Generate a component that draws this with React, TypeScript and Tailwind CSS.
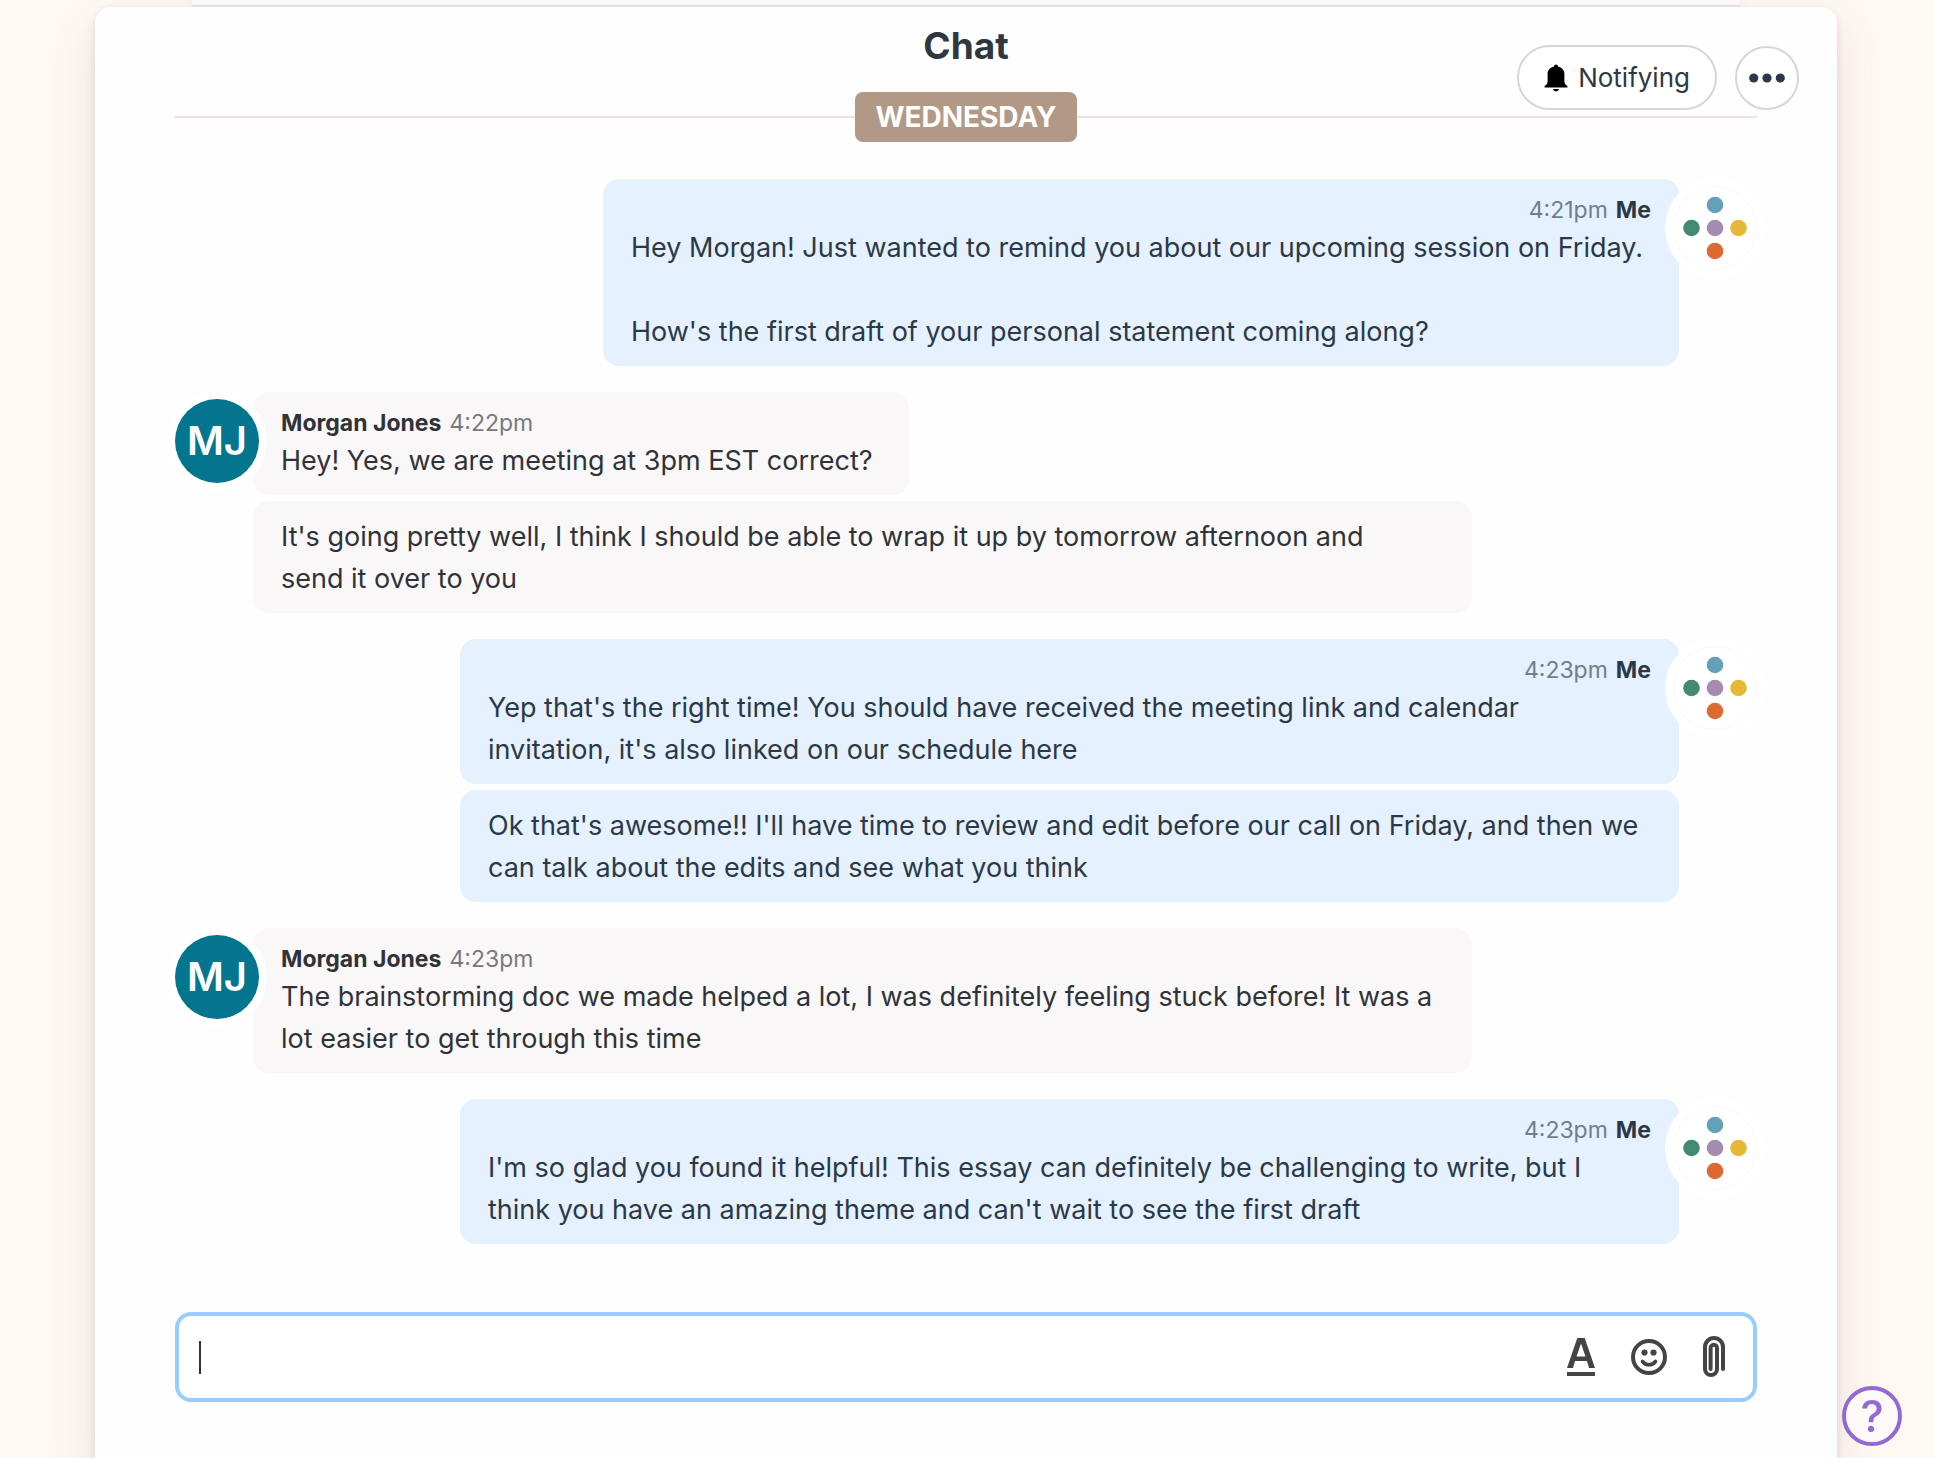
import type { ReactNode } from "react";

type Message = {
  text: string;
};

type MessageGroup = {
  id: number;
  author: string;
  time: string;
  mine: boolean;
  messages: Message[];
};

const groups: MessageGroup[] = [
  {
    id: 1,
    author: "Me",
    time: "4:21pm",
    mine: true,
    messages: [
      {
        text: "Hey Morgan! Just wanted to remind you about our upcoming session on Friday.\n\nHow's the first draft of your personal statement coming along?",
      },
    ],
  },
  {
    id: 2,
    author: "Morgan Jones",
    time: "4:22pm",
    mine: false,
    messages: [
      { text: "Hey! Yes, we are meeting at 3pm EST correct?" },
      {
        text: "It's going pretty well, I think I should be able to wrap it up by tomorrow afternoon and send\u00a0it over to you",
      },
    ],
  },
  {
    id: 3,
    author: "Me",
    time: "4:23pm",
    mine: true,
    messages: [
      {
        text: "Yep that's the right time! You should have received the meeting link and calendar invitation, it's also linked on our schedule here",
      },
      {
        text: "Ok that's awesome!! I'll have time to review and edit before our call on Friday, and then we can talk about the edits and see what you think",
      },
    ],
  },
  {
    id: 4,
    author: "Morgan Jones",
    time: "4:23pm",
    mine: false,
    messages: [
      {
        text: "The brainstorming doc we made helped a lot, I was definitely feeling stuck before! It was a lot easier to get through this time",
      },
    ],
  },
  {
    id: 5,
    author: "Me",
    time: "4:23pm",
    mine: true,
    messages: [
      {
        text: "I'm so glad you found it helpful! This essay can definitely be challenging to write, but I think you have an amazing theme and can't wait to see the first draft",
      },
    ],
  },
];

function BellIcon() {
  return (
    <svg width="24" height="28" viewBox="0 0 24 28" fill="#000" aria-hidden="true">
      <path d="M12 0.5c1.200 0 1.900.8 2 1.900 4 .9 6.400 3.600 6.400 7.600v7.500c0 2 .9 3.200 3 4.500v1.500H.6V22c2.100-1.300 3-2.500 3-4.500V10c0-4 2.400-6.700 6.400-7.600.1-1.100.8-1.900 2-1.900Z" />
      <path d="M9 25h6c-.5 1.600-1.600 2.300-3 2.300S9.500 26.600 9 25Z" />
    </svg>
  );
}

function DotsIcon() {
  return (
    <svg width="36" height="10" viewBox="0 0 36 10" fill="#2b3a4a" aria-hidden="true">
      <circle cx="4.700" cy="5" r="4.600" />
      <circle cx="18" cy="5" r="4.600" />
      <circle cx="31.300" cy="5" r="4.600" />
    </svg>
  );
}

function FormatIcon() {
  return (
    <svg width="28" height="38" viewBox="0 0 28 38" fill="#454346" aria-hidden="true">
      <path
        fillRule="evenodd"
        d="M10.300 0h7.400L28 30h-6l-2-7H8l-2 7H0L10.300 0Zm3.700 5.500L9.500 18.500h9L14 5.500Z"
      />
      <path d="M0 34h28v4H0z" />
    </svg>
  );
}

function SmileIcon() {
  return (
    <svg width="36" height="36" viewBox="0 0 36 36" fill="none" aria-hidden="true">
      <circle cx="18" cy="18" r="16" stroke="#454346" strokeWidth="4" />
      <circle cx="13.500" cy="13.500" r="3.100" fill="#454346" />
      <circle cx="22.500" cy="13.500" r="3.100" fill="#454346" />
      <path d="M11.500 22.500c3.500 4.300 9.500 4.300 13 0" stroke="#454346" strokeWidth="3.600" strokeLinecap="round" />
    </svg>
  );
}

function ClipIcon() {
  return (
    <svg width="22" height="42" viewBox="0 0 22 42" fill="none" aria-hidden="true">
      <path
        d="M20 33V11a9 9 0 0 0-18 0v22a6 6 0 0 0 12 0V12a3.200 3.200 0 0 0-6.400 0v21"
        stroke="#454346"
        strokeWidth="4"
        strokeLinecap="round"
      />
    </svg>
  );
}

function TeamLogo() {
  return (
    <svg width="84" height="84" viewBox="0 0 84 84" aria-hidden="true">
      <circle cx="42" cy="42" r="41.500" fill="#fff" stroke="#faf6fb" />
      <circle cx="42" cy="19" r="8.300" fill="#64a0b8" />
      <circle cx="18.500" cy="42" r="8.300" fill="#448a6e" />
      <circle cx="42" cy="42" r="8.300" fill="#a58bad" />
      <circle cx="65.500" cy="42" r="8.300" fill="#e6b836" />
      <circle cx="42" cy="65" r="8.300" fill="#dc6a31" />
    </svg>
  );
}

function Avatar({ mine }: { mine: boolean }) {
  if (mine) {
    return (
      <div className="relative z-10 -mt-px -ml-3.5 size-[100px] shrink-0 rounded-full border-8 border-white bg-white">
        <TeamLogo />
      </div>
    );
  }
  return (
    <div className="relative z-10 -mt-px -mr-3.5 size-[100px] shrink-0 rounded-full border-8 border-white bg-white">
      <div className="flex size-[84px] items-center justify-center rounded-full bg-[#03758f] text-[40px] font-semibold text-white">
        MJ
      </div>
    </div>
  );
}

function Bubble({ mine, children }: { mine: boolean; children: ReactNode }) {
  return (
    <div
      className={
        mine
          ? "max-w-full rounded-2xl bg-[#e5f1fe] px-7 pt-[15px] pb-[13px] text-[#2b3848]"
          : "max-w-full rounded-2xl bg-[#faf7f9] px-7 pt-[15px] pb-[13px] text-[#2f3338]"
      }
    >
      {children}
    </div>
  );
}

function Group({ group }: { group: MessageGroup }) {
  const { mine } = group;

  return (
    <section className={mine ? "-mr-2 flex justify-end" : "-ml-2 flex"}>
      {!mine && <Avatar mine={false} />}

      <div
        className={
          mine
            ? "flex max-w-[1219px] flex-col items-end gap-1.5"
            : "flex max-w-[1219px] flex-col items-start gap-1.5"
        }
      >
        {group.messages.map((message, index) => (
          <Bubble key={message.text} mine={mine}>
            {index === 0 && (
              <div
                className={
                  mine
                    ? "flex h-[33px] items-center justify-end gap-2 text-[23px]"
                    : "flex h-[33px] items-center gap-2 text-[23px]"
                }
              >
                {mine && <time className="text-[#6f7e8e]">{group.time}</time>}
                <strong className="font-bold">{group.author}</strong>
                {!mine && <time className="text-[#78787c]">{group.time}</time>}
              </div>
            )}
            <p className="pr-2 text-[27px] leading-[42px] whitespace-pre-line">{message.text}</p>
          </Bubble>
        ))}
      </div>

      {mine && <Avatar mine />}
    </section>
  );
}

export default function App() {
  return (
    <div className="flex min-h-screen flex-col bg-[#fef8f3] pr-[97px] pl-[95px] font-['Inter',sans-serif] text-[#2f3840]">
      <div className="mx-[97px] h-[7px] border-b-2 border-[#e8e6e8] bg-[#fdfbfe] shadow-[0_0_12px_rgba(90,60,40,0.15)]" />

      <main className="relative flex flex-1 flex-col rounded-t-2xl bg-[#fefefe] shadow-[0_20px_48px_rgba(110,70,40,0.12),0_4px_8px_rgba(110,70,40,0.14)]">
        <header className="relative z-10 grid grid-cols-3 items-start px-[38px]">
          <h1 className="col-start-2 pt-3.5 text-center text-[37px] leading-[50px] font-bold">Chat</h1>
          <div className="flex items-center justify-end gap-[18px] pt-[38px]">
            <button
              type="button"
              className="flex h-[65px] items-center gap-2.5 rounded-full border-2 border-[#d8d5da] bg-white px-[25px] text-[26px]"
            >
              <BellIcon />
              Notifying
            </button>
            <button
              type="button"
              aria-label="More options"
              className="flex size-16 items-center justify-center rounded-full border-2 border-[#d8d5da] bg-white"
            >
              <DotsIcon />
            </button>
          </div>
        </header>

        <div className="-mt-[18px] flex items-center px-20">
          <div className="h-0.5 flex-1 bg-[#efe2da]" />
          <h2 className="rounded-lg bg-[#b29986] px-5 text-[28px] leading-[50px] font-bold text-white">WEDNESDAY</h2>
          <div className="h-0.5 flex-1 bg-[#efe2da]" />
        </div>

        <div className="flex flex-col gap-[26px] px-20 pt-[37px]">
          {groups.map((group) => (
            <Group key={group.id} group={group} />
          ))}
        </div>

        <form className="mx-20 mt-[68px] flex h-[90px] items-center rounded-2xl border-4 border-[#99ccff] bg-white pr-7 pl-5">
          <span className="h-[33px] w-0.5 bg-[#2f3338]" />
          <input
            type="text"
            aria-label="Message"
            className="h-full min-w-0 flex-1 bg-transparent text-[27px] outline-none"
          />
          <div className="flex items-center gap-9">
            <button type="button" aria-label="Text formatting">
              <FormatIcon />
            </button>
            <button type="button" aria-label="Emoji">
              <SmileIcon />
            </button>
            <button type="button" aria-label="Attach file">
              <ClipIcon />
            </button>
          </div>
        </form>
      </main>

      <button
        type="button"
        aria-label="Help"
        className="fixed right-8 bottom-3 flex size-[60px] items-center justify-center rounded-full border-4 border-[#9569d4] bg-[#fdf9f6] text-[44px] font-medium text-[#9569d4]"
      >
        ?
      </button>
    </div>
  );
}
